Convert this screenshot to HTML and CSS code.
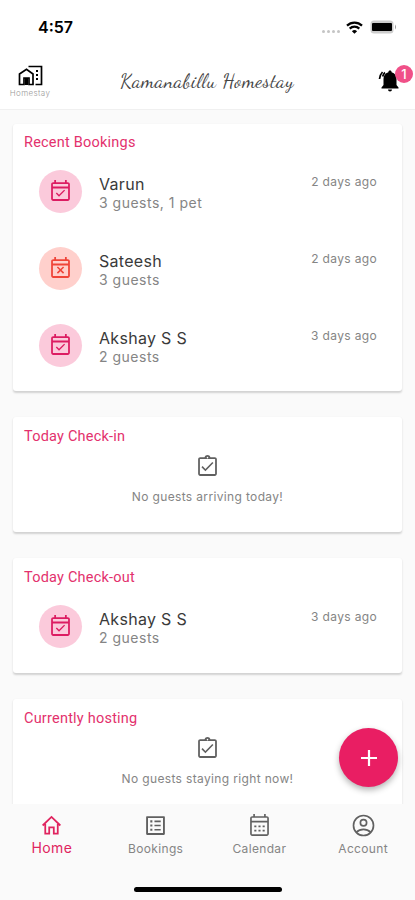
FILE: index.html
```html
<!DOCTYPE html>
<html lang="en">
<head>
<meta charset="utf-8">
<meta name="viewport" content="width=device-width, initial-scale=1">
<title>Kamanabillu Homestay</title>
<link rel="stylesheet" href="styles.css">
</head>
<body>
<svg class="defs" aria-hidden="true">
  <symbol id="event-ok" viewBox="0 0 24 24"><path d="M16.400 11.060 15.470 10.200l-4.880 4.800-2.120-2.120-.95.95L10.590 17l5.810-5.940zM19 3h-1V1h-1.700v2H7.700V1H6v2H5c-1.110 0-1.990.9-1.990 2L3 19c0 1.100.89 2 2 2h14c1.100 0 2-.9 2-2V5c0-1.100-.9-2-2-2zm.3 16.300H4.700V9h14.600v10.300zM4.700 7.300V4.700h14.600v2.600z"/></symbol>
  <symbol id="event-no" viewBox="0 0 24 24"><path d="M9.560 17l2.440-2.440L14.440 17l1.060-1.060-2.440-2.440 2.440-2.440L14.440 10 12 12.440 9.560 10 8.500 11.060l2.440 2.440-2.440 2.440L9.560 17zM19 3h-1V1h-1.700v2H7.700V1H6v2H5c-1.110 0-1.990.9-1.990 2L3 19c0 1.100.89 2 2 2h14c1.100 0 2-.9 2-2V5c0-1.100-.9-2-2-2zm.3 16.300H4.700V9h14.600v10.300zM4.700 7.300V4.700h14.600v2.600z"/></symbol>
  <symbol id="clip" viewBox="0 0 24 24"><path d="M19 3h-4.180C14.400 1.840 13.300 1 12 1s-2.400.84-2.820 2H5c-1.100 0-2 .9-2 2v14c0 1.100.9 2 2 2h14c1.100 0 2-.9 2-2V5c0-1.100-.9-2-2-2zm-7-.25c.41 0 .75.34.75.75s-.34.75-.75.75-.75-.34-.75-.75.34-.75.75-.75zM19.300 19.300H4.700V4.700h14.600v14.600zM17.700 8.700l-1.110-1.120-6.600 6.700-2.690-2.680-1.110 1.120 3.800 3.800z"/></symbol>
</svg>
<div class="app">
  <div class="status">
    <span class="time">4:57</span>
    <span class="dots"><i></i><i></i><i></i><i></i></span>
    <svg class="wifi" viewBox="0 0 17 13"><g fill="none" stroke="#000" stroke-width="2.200"><path d="M1 4.600a10.800 10.800 0 0 1 15 0"/><path d="M3.700 7.600a6.900 6.900 0 0 1 9.600 0"/></g><path d="M8.500 12.800 5.900 10.200a3.700 3.700 0 0 1 5.200 0z"/></svg>
    <svg class="battery" viewBox="0 0 27 14"><rect x=".5" y=".5" width="23" height="13" rx="3.500" fill="#ccc"/><rect x="2" y="3" width="20" height="8" rx="1"/><path d="M25 4.500q2 2.500 0 5z" fill="#999"/></svg>
  </div>
  <header class="header">
    <div class="logo">
      <svg viewBox="0 0 25 21"><g fill="none" stroke="#000" stroke-width="1.700"><path d="M1.500 19.500V9L8.500 4.200 15 9v10.500H11V13H6v6.500z"/><path d="M10.500 1.500H23.500V19.500H17.500"/></g><path d="M7 13h3v7H7zM18 5h2v2h-2zM18 9h2v2h-2zM18 13h2v2h-2z"/></svg>
      <span>Homestay</span>
    </div>
    <h1>Kamanabillu Homestay</h1>
    <div class="bell">
      <svg viewBox="0 0 22 22"><path d="M12 .5c-1 0-1.600.7-1.600 1.700C7 3 5.500 5.600 5.500 9v6L3.500 17.500v1h17v-1L18.500 15V9c0-3.400-1.500-6-4.900-6.800C13.600 1.200 13 .5 12 .5zM10 19.500h4a2 2 0 0 1-4 0z"/><path d="M1.500 9Q2 4.500 4.500 2M4.700 6.500Q5.300 4 7 2.500" fill="none" stroke="#000" stroke-width="1.700"/></svg>
      <span class="badge">1</span>
    </div>
  </header>
  <main class="content">
    <section class="card recent">
      <h2>Recent Bookings</h2>
      <div class="row"><span class="avatar"><svg><use href="#event-ok"/></svg></span><div class="who"><b>Varun</b><span>3 guests, 1 pet</span></div><time>2 days ago</time></div>
      <div class="row"><span class="avatar cancelled"><svg><use href="#event-no"/></svg></span><div class="who"><b>Sateesh</b><span>3 guests</span></div><time>2 days ago</time></div>
      <div class="row"><span class="avatar"><svg><use href="#event-ok"/></svg></span><div class="who"><b>Akshay S S</b><span>2 guests</span></div><time>3 days ago</time></div>
    </section>
    <section class="card empty">
      <h2>Today Check-in</h2>
      <svg><use href="#clip"/></svg>
      <p>No guests arriving today!</p>
    </section>
    <section class="card checkout">
      <h2>Today Check-out</h2>
      <div class="row"><span class="avatar"><svg><use href="#event-ok"/></svg></span><div class="who"><b>Akshay S S</b><span>2 guests</span></div><time>3 days ago</time></div>
    </section>
    <section class="card empty">
      <h2>Currently hosting</h2>
      <svg><use href="#clip"/></svg>
      <p>No guests staying right now!</p>
    </section>
  </main>
  <button class="fab" aria-label="Add booking"><svg viewBox="0 0 16 16"><path d="M8 0v16M0 8h16" stroke="#fff" stroke-width="2.200"/></svg></button>
  <nav class="nav">
    <a class="active"><svg viewBox="0 0 24 24"><path d="M3.500 12 12 3.800 20.500 12M6 10.500v9.200h3.800v-6h4.400v6H18v-9.200" fill="none" stroke="currentColor" stroke-width="1.700"/></svg><span>Home</span></a>
    <a><svg viewBox="0 0 24 24"><path d="M19.200 4.800v14.400H4.800V4.800h14.400m.9-1.800H3.900c-.5 0-.9.4-.9.9v16.200c0 .4.400.9.900.9h16.200c.4 0 .9-.5.900-.9V3.900c0-.5-.5-.9-.9-.9zM11 7.300h6v1.500h-6zm0 4h6v1.500h-6zm0 4h6v1.500h-6zM7 7h2v2H7zm0 4h2v2H7zm0 4h2v2H7z"/></svg><span>Bookings</span></a>
    <a><svg viewBox="0 0 24 24"><path fill-rule="evenodd" d="M19 3h-1V1h-1.600v2H7.600V1H6v2H5c-1.100 0-2 .9-2 2v15c0 1.100.9 2 2 2h14c1.100 0 2-.9 2-2V5c0-1.100-.9-2-2-2zm.4 17.400H4.600V9h14.800v11.400zM4.600 7.400V4.600h14.800v2.800zM7 12h2v1.700H7zM11 12h2v1.700h-2zM15 12h2v1.700h-2zM7 16h2v1.700H7zM11 16h2v1.700h-2zM15 16h2v1.700h-2z"/></svg><span>Calendar</span></a>
    <a><svg viewBox="0 0 24 24"><g fill="none" stroke="currentColor" stroke-width="1.600"><circle cx="12" cy="12" r="9.600"/><circle cx="12" cy="9.300" r="3"/><path d="M5 18.600Q8 15.700 12 15.700t7 2.900"/></g></svg><span>Account</span></a>
  </nav>
  <div class="home-bar"></div>
</div>
</body>
</html>
```
FILE: styles.css
```css
* { box-sizing: border-box; }
body { margin: 0; background: #fafafa; font-family: Inter, "Liberation Sans", sans-serif; }
h1, h2, p { margin: 0; font-weight: 400; }
.defs { position: absolute; width: 0; height: 0; }
.app { position: relative; display: flex; flex-direction: column; width: 415px; height: 900px; overflow: hidden; }

.status { display: flex; align-items: center; flex: none; height: 54px; padding: 0 18px 0 38px; background: #fff; }
.time { flex: 1; font-size: 16px; line-height: 20px; font-weight: 600; letter-spacing: 0; }
.dots { display: flex; gap: 2px; margin: 9px 6px 0 0; }
.dots i { width: 3px; height: 3px; border-radius: 50%; background: #c4c4c4; }
.wifi { width: 17px; height: 13px; margin-right: 7px; }
.battery { width: 27px; height: 14px; }

.header { display: flex; align-items: center; flex: none; height: 56px; padding: 0 1px 0 10px; background: #fff; border-bottom: 1px solid #f0f0f0; }
.logo { display: flex; flex-direction: column; align-items: center; width: 40px; }
.logo svg { width: 25px; height: 21px; margin-top: 2px; }
.logo span { margin-top: 1px; font-size: 8px; line-height: 13px; font-weight: 300; color: #999; letter-spacing: 0.35px; }
.header h1 { flex: 1; padding: 0 0 2px 70px; font-family: "Dancing Script", "Liberation Serif", cursive; font-size: 20px; line-height: 26px; letter-spacing: 0.5px; color: #444; white-space: nowrap; }
.bell { position: relative; width: 36px; height: 26px; }
.bell svg { display: block; width: 22px; height: 22px; margin-top: 1px; }
.badge { position: absolute; left: 17px; top: -4px; width: 18px; height: 18px; border-radius: 50%; background: #f05088; color: #fff; font-size: 13px; line-height: 18px; font-weight: 500; text-align: center; }

.content { flex: 1; min-height: 0; display: flex; flex-direction: column; gap: 26px; padding: 14px 13px 0; overflow: hidden; }
.card { flex: none; padding: 11px 11px 0; background: #fff; border-radius: 3px; box-shadow: 0 1.5px 2px rgba(0,0,0,.16); }
.card h2 { align-self: flex-start; font-family: Roboto, sans-serif; font-size: 14.500px; line-height: 18px; letter-spacing: 0.22px; color: #e3316d; white-space: nowrap; }
.recent { height: 267px; padding-top: 10px; }
.empty { display: flex; flex-direction: column; align-items: center; height: 115px; }
.checkout { height: 115px; }
.row { display: flex; align-items: center; height: 77px; padding: 0 14px 0 15px; }
.avatar { display: grid; place-items: center; width: 43px; height: 43px; margin: 1px 17px 0 0; border-radius: 50%; background: #fbcadb; }
.avatar svg { width: 25px; height: 25px; fill: #dc1c62; }
.avatar.cancelled { background: #ffd0cc; }
.avatar.cancelled svg { fill: #f04438; }
.who { flex: 1; display: flex; flex-direction: column; padding-top: 9px; height: 50px; }
.who b { font-size: 16px; line-height: 19px; font-weight: 400; letter-spacing: 0.3px; color: #3a3a3a; }
.who span { font-size: 14px; line-height: 18px; color: #858585; letter-spacing: 0.5px; }
.row time { align-self: flex-start; margin-top: 22px; font-size: 12px; line-height: 16px; color: #858585; letter-spacing: 0.35px; }
.empty > svg { width: 25px; height: 25px; margin-top: 8px; fill: #606060; }
.empty p { margin-top: 9px; font-size: 12px; line-height: 18px; color: #858585; letter-spacing: 0.35px; }

.fab { position: absolute; left: 339px; top: 728px; display: grid; place-items: center; width: 59px; height: 59px; padding: 0; border: 0; border-radius: 50%; background: #e91e63; box-shadow: 0 3px 6px rgba(0,0,0,.3); }
.fab svg { width: 16px; height: 16px; }
.nav { display: flex; flex: none; height: 83px; background: #fafafa; }
.nav a { flex: 1; display: flex; flex-direction: column; align-items: center; padding-top: 9px; color: #606060; }
.nav svg { width: 25px; height: 25px; fill: currentColor; }
.nav span { margin-top: 1px; font-size: 12px; line-height: 19px; letter-spacing: 0.35px; color: #858585; }
.nav .active { color: #e0245f; }
.nav .active span { font-size: 14px; color: #e0245f; line-height: 17px; }
.home-bar { flex: none; align-self: center; width: 148px; height: 5px; margin-bottom: 8px; border-radius: 3px; background: #000; }
```
